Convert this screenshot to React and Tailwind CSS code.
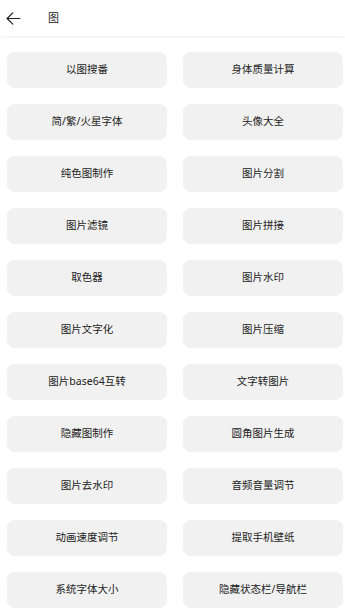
import React from "react";

const items = [
  "以图搜番", "身体质量计算",
  "简/繁/火星字体", "头像大全",
  "纯色图制作", "图片分割",
  "图片滤镜", "图片拼接",
  "取色器", "图片水印",
  "图片文字化", "图片压缩",
  "图片base64互转", "文字转图片",
  "隐藏图制作", "圆角图片生成",
  "图片去水印", "音频音量调节",
  "动画速度调节", "提取手机壁纸",
  "系统字体大小", "隐藏状态栏/导航栏",
];

export default function App() {
  return (
    <div
      className="w-[345px] h-[616px] bg-white overflow-hidden"
      style={{ fontFamily: '"Noto Sans", "Noto Sans CJK SC", sans-serif' }}
    >
      <div className="h-[36px] flex items-center bg-white shadow-[0_1px_3px_rgba(0,0,0,0.08)] relative">
        <svg width="17" height="17" viewBox="0 0 24 24" className="ml-[5px]" fill="none" stroke="#222" strokeWidth="1.7" strokeLinecap="round" strokeLinejoin="round">
          <path d="M21 12H3" />
          <path d="M11 4l-8 8 8 8" />
        </svg>
        <span className="ml-[26px] text-[11px] text-[#222]">图</span>
      </div>
      <div className="grid grid-cols-[160px_160px] gap-x-[16px] gap-y-[16px] pl-[7px] pt-[16px]">
        {items.map((t) => (
          <div
            key={t}
            className="h-[36px] rounded-[8px] bg-[#f1f1f1] flex items-center justify-center text-[10.5px] text-[#222]"
          >
            {t}
          </div>
        ))}
      </div>
    </div>
  );
}
